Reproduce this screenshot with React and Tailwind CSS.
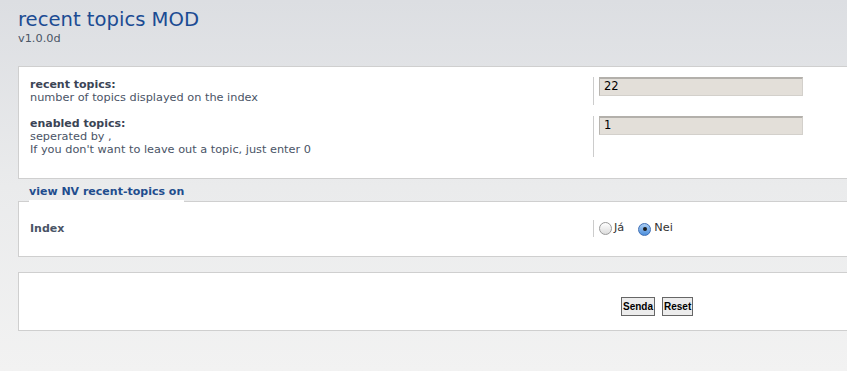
import React from 'react';

const font = { fontFamily: '"DejaVu Sans", Verdana, sans-serif' };

const Radio = ({ checked }) => (
    <span
        className={
            checked
                ? "inline-flex items-center justify-center w-[13px] h-[13px] rounded-full border border-[#3f6fb5] bg-gradient-to-b from-[#a9cdf3] to-[#4d8fdc]"
                : "inline-block w-[13px] h-[13px] rounded-full border border-[#9a9a9a] bg-gradient-to-b from-[#ffffff] to-[#dcdcdc]"
        }
    >
        {checked && <span className="block w-[4px] h-[4px] rounded-full bg-[#1a1a1a]" />}
    </span>
);

const Input = ({ value }) => (
    <div className="w-[204px] h-[19px] bg-[#e3dfd9] border border-[#d3d0cb] border-t-[#b3b0ab] border-l-[#b8b5b0] border-t-2 pl-[4px] text-[11.5px] leading-[15px] text-black">
        {value}
    </div>
);

export default function App() {
    return (
        <div className="w-[847px] h-[371px] overflow-hidden bg-gradient-to-b from-[#dcdee2] via-[#eaebec] to-[#f2f2f2]" style={font}>
            <div className="pl-[18px] pt-[8px]">
                <h1 className="text-[19.6px] leading-[24px] text-[#1b4b93]">recent topics MOD</h1>
                <div className="text-[11.3px] leading-[14px] text-[#4a5566]">v1.0.0d</div>
            </div>

            <div className="ml-[18px] mt-[20px] w-[860px] bg-white border border-[#cfcfcf] pt-[10px] pb-[21px]">
                <div className="flex">
                    <div className="w-[574px] pl-[11px] pt-[1px] text-[11.3px] leading-[13px] text-[#4a5466]">
                        <div className="font-bold text-[11px] text-[#3b4455]">recent topics:</div>
                        <div>number of topics displayed on the index</div>
                    </div>
                    <div className="border-l border-[#cccccc] h-[28px] pl-[5px]">
                        <Input value="22" />
                    </div>
                </div>
                <div className="flex mt-[11px]">
                    <div className="w-[574px] pl-[11px] pt-[1px] text-[11.3px] leading-[13px] text-[#4a5466]">
                        <div className="font-bold text-[11px] text-[#3b4455]">enabled topics:</div>
                        <div>seperated by ,</div>
                        <div>If you don't want to leave out a topic, just enter 0</div>
                    </div>
                    <div className="border-l border-[#cccccc] h-[41px] pl-[5px]">
                        <Input value="1" />
                    </div>
                </div>
            </div>

            <div className="ml-[29px] mt-[5px] relative z-10 -mb-[1px] w-fit border-b-2 border-white">
                <span className="block text-[11px] leading-[15px] font-bold text-[#1f4d8e] pb-[1px]">view NV recent-topics on</span>
            </div>

            <div className="ml-[18px] w-[860px] bg-white border border-[#cfcfcf] pt-[18px] pb-[19px]">
                <div className="flex items-center">
                    <div className="w-[574px] pl-[11px] text-[11px] leading-[13px] font-bold text-[#4a5466]">Index</div>
                    <div className="border-l border-[#cccccc] h-[17px] pl-[5px] flex items-center text-[11.3px] text-[#333]">
                        <Radio />
                        <span className="ml-[2px]">Já</span>
                        <span className="ml-[14px]"><Radio checked /></span>
                        <span className="ml-[3px]">Nei</span>
                    </div>
                </div>
            </div>

            <div className="ml-[18px] mt-[15px] w-[860px] h-[59px] bg-white border border-[#cfcfcf] flex items-start">
                <div className="ml-[602px] mt-[24px] flex gap-[7px]" style={{ fontFamily: '"Liberation Sans", Arial, sans-serif' }}>
                    <button className="h-[19px] px-[1px] border border-[#666] bg-[#ececec] text-[10px] font-bold text-black leading-[15px]">Senda</button>
                    <button className="h-[19px] px-[1px] border border-[#666] bg-[#ececec] text-[10px] font-bold text-black leading-[15px]">Reset</button>
                </div>
            </div>
        </div>
    );
}
